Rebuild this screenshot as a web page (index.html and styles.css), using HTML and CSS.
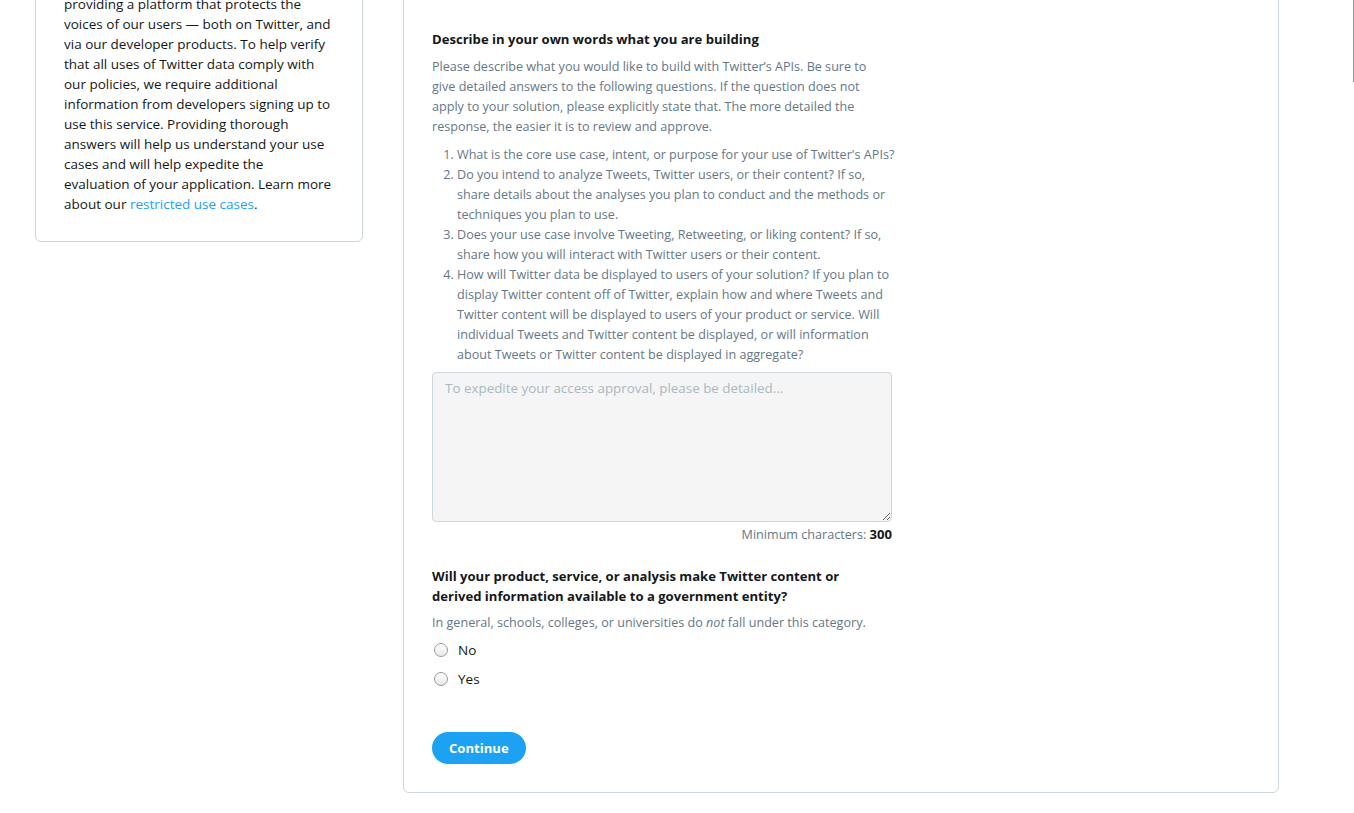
FILE: index.html
```html
<!DOCTYPE html>
<html lang="en">
<head>
<meta charset="utf-8">
<title>Apply for access</title>
<link rel="stylesheet" href="styles.css">
</head>
<body>
<div class="scroll-thumb"></div>
<div class="page">
  <aside class="card card-side">
    <p class="side-text">Twitter is committed to<br>providing a platform that protects the voices of our users — both on Twitter, and via our developer products. To help verify that all uses of Twitter data comply with our policies, we require additional information from developers signing up to use this service. Providing thorough answers will help us understand your use cases and will help expedite the<br>evaluation of your application. Learn more about our <a href="#" class="link">restricted use cases</a>.</p>
  </aside>
  <main class="card card-main">
    <section class="field">
      <h2 class="field-title">Describe in your own words what you are building</h2>
      <p class="field-help">Please describe what you would like to build with Twitter’s APIs. Be sure to give detailed answers to the following questions. If the question does not apply to your solution, please explicitly state that. The more detailed the response, the easier it is to review and approve.</p>
      <ol class="field-list">
        <li>What is the core use case, intent, or purpose for your use of Twitter's APIs?</li>
        <li>Do you intend to analyze Tweets, Twitter users, or their content? If so, share details about the analyses you plan to conduct and the methods or techniques you plan to use.</li>
        <li>Does your use case involve Tweeting, Retweeting, or liking content? If so, share how you will interact with Twitter users or their content.</li>
        <li>How will Twitter data be displayed to users of your solution? If you plan to display Twitter content off of Twitter, explain how and where Tweets and Twitter content will be displayed to users of your product or service. Will individual Tweets and Twitter content be displayed, or will information about Tweets or Twitter content be displayed in aggregate?</li>
      </ol>
      <textarea class="textarea" placeholder="To expedite your access approval, please be detailed..."></textarea>
      <div class="min-chars">Minimum characters: <strong>300</strong></div>
    </section>
    <section class="field field-gov">
      <h2 class="field-title">Will your product, service, or analysis make Twitter content or derived information available to a government entity?</h2>
      <p class="field-help">In general, schools, colleges, or universities do <em>not</em> fall under this category.</p>
      <label class="radio-row"><input type="radio" name="gov" class="radio"><span>No</span></label>
      <label class="radio-row"><input type="radio" name="gov" class="radio"><span>Yes</span></label>
    </section>
    <button class="btn-primary" type="button">Continue</button>
  </main>
</div>
</body>
</html>
```
FILE: styles.css
```css
html, body {
  margin: 0;
  padding: 0;
  background: #fff;
  overflow: hidden;
}
body {
  font-family: "Open Sans", "Noto Sans", sans-serif;
  color: #14171a;
  font-size: 13.5px;
  line-height: 20px;
}
.scroll-thumb {
  position: fixed;
  top: 0;
  right: 0;
  width: 1px;
  height: 82px;
  background: #9a9a9a;
}
.page {
  display: flex;
  align-items: flex-start;
  gap: 40px;
  padding: 0 35px;
  margin-top: -55px;
}
.card {
  border: 1px solid #ccd6dd;
  border-radius: 6px;
  background: #fff;
  box-sizing: border-box;
}
.card-side {
  width: 328px;
  flex: none;
  padding: 28px 28px 27px;
}
.side-text {
  margin: 0;
  font-size: 13.5px;
  line-height: 20px;
}
.link {
  color: #1da1f2;
  text-decoration: none;
}
.card-main {
  width: 876px;
  flex: none;
  padding: 83px 28px 28px;
}
.field {
  width: 460px;
}
.field-title {
  margin: 0 0 8px;
  max-width: 430px;
  font-size: 13.1px;
  line-height: 20px;
  font-weight: 700;
}
.field-help {
  margin: 0 0 8px;
  font-size: 12.6px;
  line-height: 20px;
  color: #657786;
}
.field-list {
  margin: 0 -5px 7px 0;
  padding-left: 25px;
  font-size: 12.6px;
  line-height: 20px;
  color: #657786;
}
.textarea {
  display: block;
  width: 460px;
  height: 150px;
  box-sizing: border-box;
  margin: 0;
  padding: 6px 12px;
  border: 1px solid #ccd6dd;
  border-radius: 4px;
  background: #f5f5f5;
  font-family: inherit;
  font-size: 13.4px;
  line-height: 18px;
  color: #14171a;
}
.textarea::placeholder {
  color: #aab8c2;
}
.min-chars {
  margin-top: 2px;
  text-align: right;
  font-size: 12.6px;
  line-height: 20px;
  color: #657786;
}
.min-chars strong {
  color: #14171a;
  font-size: 13.1px;
}
.field-gov {
  margin-top: 21px;
}
.field-gov .field-title {
  margin-bottom: 7px;
}
.field-gov .field-help {
  margin: 0 0 7px;
}
.radio-row {
  display: flex;
  align-items: center;
  height: 20px;
  margin-bottom: 9px;
  font-size: 13.5px;
}
.radio {
  appearance: none;
  -webkit-appearance: none;
  width: 14px;
  height: 14px;
  margin: 0 10px 0 2px;
  border: 1px solid #9a9a9a;
  border-radius: 50%;
  background: linear-gradient(#ffffff, #e8e8e8);
  box-sizing: border-box;
}
.btn-primary {
  margin-top: 34px;
  height: 32px;
  padding: 0 17px;
  border: 0;
  border-radius: 16px;
  background: #1da1f2;
  color: #fff;
  font-family: inherit;
  font-size: 13.1px;
  font-weight: 700;
  line-height: 32px;
}
```
